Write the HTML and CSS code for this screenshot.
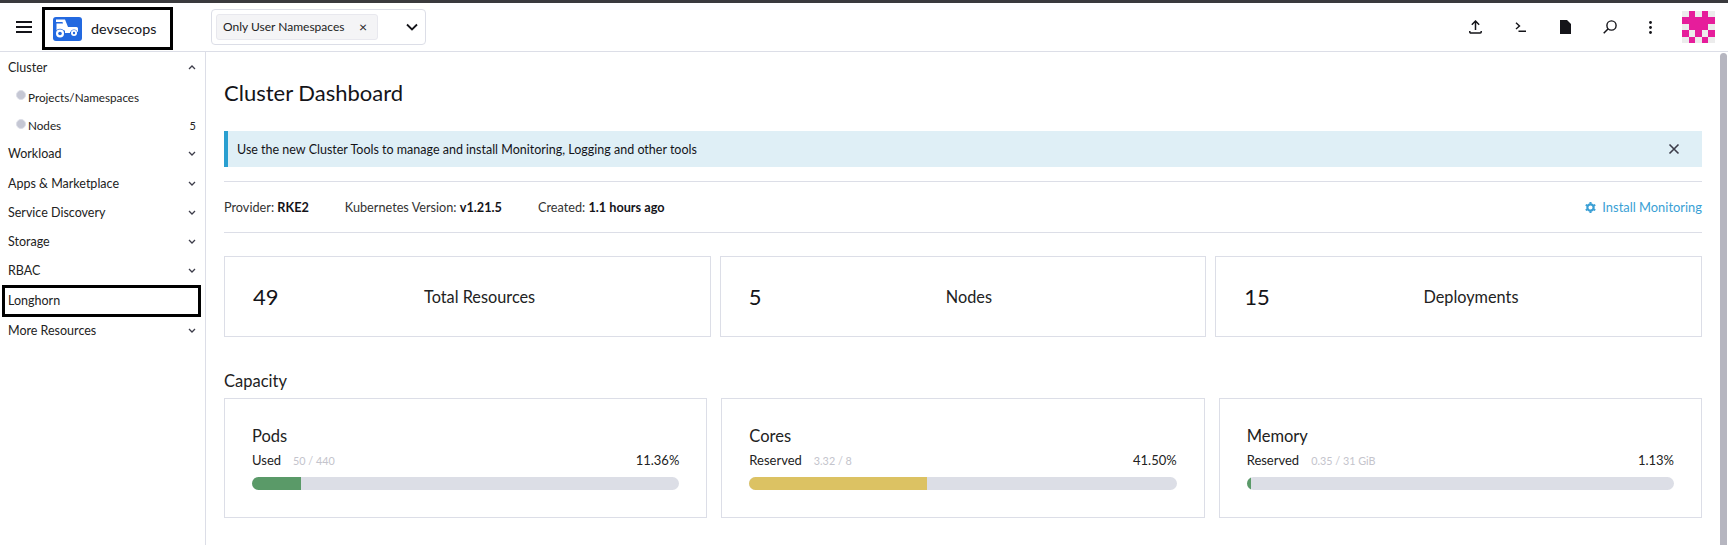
FILE: index.html
```html
<!DOCTYPE html>
<html lang="en">
<head>
    <meta charset="UTF-8">
    <title>Cluster Dashboard</title>
    <link rel="stylesheet" href="styles.css">
</head>
<body>
  <header class="topbar">
    <button class="menu-btn" aria-label="Menu">
      <svg width="18" height="14" viewBox="0 0 18 14"><path d="M1 2h16M1 7h16M1 12h16" stroke="#141419" stroke-width="2"/></svg>
    </button>
    <div class="cluster-box">
      <svg class="cluster-logo" width="29" height="24" viewBox="0 0 29 24">
        <rect width="29" height="24" rx="3" fill="#2369e0"/>
        <path d="M3 2.500h9l3 7.500h8.500a1.500 1.500 0 0 1 1.500 1.500V15h-8v1H12v-2.500H3.500V6.500h6.500L9.500 5H3z" fill="#fff"/>
        <circle cx="7" cy="16.500" r="4.800" fill="#2369e0"/>
        <circle cx="7" cy="16.500" r="4" fill="#fff"/>
        <circle cx="7" cy="16.500" r="1.800" fill="#2369e0"/>
        <circle cx="21" cy="16" r="3.600" fill="#2369e0"/>
        <circle cx="21" cy="16" r="3" fill="#fff"/>
        <circle cx="21" cy="16" r="1.200" fill="#2369e0"/>
      </svg>
      <span class="cluster-name">devsecops</span>
    </div>
    <div class="ns-select">
      <span class="ns-tag">Only User Namespaces <span class="ns-x">×</span></span>
      <svg width="12" height="8" viewBox="0 0 12 8"><path d="M1 1.500l5 5 5-5" fill="none" stroke="#141419" stroke-width="1.800"/></svg>
    </div>
    <div class="top-icons">
      <svg width="13" height="14" viewBox="0 0 13 14"><path d="M6.500 10V1M2.800 4.700L6.500 1l3.700 3.700M.8 11v1a1 1 0 0 0 1 1h9.400a1 1 0 0 0 1-1v-1" fill="none" stroke="#141419" stroke-width="1.500"/></svg>
      <svg width="11" height="10" viewBox="0 0 11 10"><path d="M1 .7L4.500 4 1 7M3.500 9.200H11" fill="none" stroke="#141419" stroke-width="1.400"/></svg>
      <svg width="11" height="14" viewBox="0 0 11 14"><path d="M0 0h7l4 4v10H0z" fill="#141419"/></svg>
      <svg width="14" height="14" viewBox="0 0 14 14"><circle cx="8.500" cy="5.500" r="4.600" fill="none" stroke="#141419" stroke-width="1.400"/><path d="M5.200 8.800L.7 13.300" stroke="#141419" stroke-width="1.500"/></svg>
      <svg width="3" height="13" viewBox="0 0 3 13"><circle cx="1.500" cy="1.500" r="1.400" fill="#141419"/><circle cx="1.500" cy="6.500" r="1.400" fill="#141419"/><circle cx="1.500" cy="11.500" r="1.400" fill="#141419"/></svg>
    </div>
    <svg class="avatar" width="33" height="32" viewBox="0 0 5 5" preserveAspectRatio="none" shape-rendering="crispEdges">
      <rect width="5" height="5" fill="#ececec"/>
      <path d="M1 0h1v1H1zM3 0h1v1H3zM0 1h5v1H0zM1 2h3v1H1zM0 3h1v1H0zM2 3h1v1H2zM4 3h1v1H4zM1 4h1v1H1zM3 4h1v1H3z" fill="#e61d9b"/>
    </svg>
  </header>

  <div class="layout">
    <nav class="sidebar">
      <div class="nav-row">Cluster <svg class="chev" width="8" height="5" viewBox="0 0 8 5"><path d="M1 4l3-3 3 3" fill="none" stroke="#3d3d4a" stroke-width="1.300"/></svg></div>
      <div class="nav-row nav-sub"><i class="dot"></i>Projects/Namespaces</div>
      <div class="nav-row nav-sub"><i class="dot"></i>Nodes <span class="count">5</span></div>
      <div class="nav-row">Workload <svg class="chev" width="8" height="5" viewBox="0 0 8 5"><path d="M1 1l3 3 3-3" fill="none" stroke="#3d3d4a" stroke-width="1.300"/></svg></div>
      <div class="nav-row">Apps &amp; Marketplace <svg class="chev" width="8" height="5" viewBox="0 0 8 5"><path d="M1 1l3 3 3-3" fill="none" stroke="#3d3d4a" stroke-width="1.300"/></svg></div>
      <div class="nav-row">Service Discovery <svg class="chev" width="8" height="5" viewBox="0 0 8 5"><path d="M1 1l3 3 3-3" fill="none" stroke="#3d3d4a" stroke-width="1.300"/></svg></div>
      <div class="nav-row">Storage <svg class="chev" width="8" height="5" viewBox="0 0 8 5"><path d="M1 1l3 3 3-3" fill="none" stroke="#3d3d4a" stroke-width="1.300"/></svg></div>
      <div class="nav-row">RBAC <svg class="chev" width="8" height="5" viewBox="0 0 8 5"><path d="M1 1l3 3 3-3" fill="none" stroke="#3d3d4a" stroke-width="1.300"/></svg></div>
      <div class="nav-row nav-marked">Longhorn</div>
      <div class="nav-row">More Resources <svg class="chev" width="8" height="5" viewBox="0 0 8 5"><path d="M1 1l3 3 3-3" fill="none" stroke="#3d3d4a" stroke-width="1.300"/></svg></div>
    </nav>

    <main class="content">
      <h1 class="title">Cluster Dashboard</h1>

      <div class="banner">
        <span>Use the new Cluster Tools to manage and install Monitoring, Logging and other tools</span>
        <svg width="12" height="12" viewBox="0 0 12 12"><path d="M1.500 1.500l9 9M10.500 1.500l-9 9" stroke="#3d3d4a" stroke-width="1.600"/></svg>
      </div>

      <div class="meta">
        <span>Provider: <b>RKE2</b></span>
        <span>Kubernetes Version: <b>v1.21.5</b></span>
        <span>Created: <b>1.1 hours ago</b></span>
        <a class="install" href="#">
          <svg width="11" height="11" viewBox="0 0 12 12"><circle cx="6" cy="6" r="3.400" fill="none" stroke="#3a9fd5" stroke-width="2.400"/><path d="M6 0v2M6 10v2M0.800 3l1.700 1M9.500 8l1.700 1M0.800 9l1.700-1M9.500 4l1.700-1" stroke="#3a9fd5" stroke-width="2.200"/></svg>
          Install Monitoring
        </a>
      </div>

      <div class="stats">
        <div class="stat"><span class="stat-num">49</span><span class="stat-label">Total Resources</span></div>
        <div class="stat"><span class="stat-num">5</span><span class="stat-label">Nodes</span></div>
        <div class="stat"><span class="stat-num">15</span><span class="stat-label">Deployments</span></div>
      </div>

      <h2 class="section">Capacity</h2>

      <div class="gauges">
        <div class="gauge">
          <h3>Pods</h3>
          <div class="gauge-info"><span>Used</span><small>50 / 440</small><span class="pct">11.36%</span></div>
          <div class="bar"><div class="fill fill-green" style="width: 11.36%"></div></div>
        </div>
        <div class="gauge">
          <h3>Cores</h3>
          <div class="gauge-info"><span>Reserved</span><small>3.32 / 8</small><span class="pct">41.50%</span></div>
          <div class="bar"><div class="fill fill-yellow" style="width: 41.5%"></div></div>
        </div>
        <div class="gauge">
          <h3>Memory</h3>
          <div class="gauge-info"><span>Reserved</span><small>0.35 / 31 GiB</small><span class="pct">1.13%</span></div>
          <div class="bar"><div class="fill fill-green" style="width: 1.13%"></div></div>
        </div>
      </div>
    </main>
  </div>
</body>
</html>
```

FILE: styles.css
```css
* { box-sizing: border-box; }
html, body { height: 100%; }
body { margin: 0; height: 545px; overflow: hidden; display: flex; flex-direction: column; font-family: Lato, "Liberation Sans", sans-serif; font-size: 14px; color: #141419; background: #fff; border-top: 3px solid #3a3a3d; }

.topbar { flex: none; height: 49px; display: flex; align-items: center; border-bottom: 1px solid #dcdee7; }
.menu-btn { margin-left: 15px; padding: 0; width: 20px; height: 14px; border: none; background: none; display: flex; }
.cluster-box { margin-left: 7px; margin-top: 3px; width: 131px; height: 43px; border: 3px solid #000; display: flex; align-items: center; padding-left: 8px; gap: 9px; }
.cluster-logo { flex: none; }
.cluster-name { font-size: 14.300px; color: #141419; }
.ns-select { margin-left: 38px; margin-top: -1px; width: 215px; height: 36px; border: 1px solid #dcdee7; border-radius: 4px; display: flex; align-items: center; justify-content: space-between; padding: 0 7px 0 4px; }
.ns-tag { width: 162px; height: 26px; background: #f4f4f6; border: 1px solid #e8e8ee; border-radius: 3px; font-size: 12px; color: #222; white-space: nowrap; display: flex; align-items: center; justify-content: space-between; padding: 0 10px 0 6px; }
.ns-x { font-size: 14px; }
.top-icons { margin-left: auto; display: flex; align-items: center; }
.top-icons svg { flex: none; }
.top-icons svg:nth-child(1) { margin-right: 33px; }
.top-icons svg:nth-child(2) { margin-right: 34px; }
.top-icons svg:nth-child(3) { margin-right: 32px; }
.top-icons svg:nth-child(4) { margin-right: 32px; }
.avatar { margin: 0 13px 0 30px; flex: none; }

.layout { flex: 1; display: flex; min-height: 0; }
.sidebar { flex: none; width: 206px; border-right: 1px solid #dcdee7; padding: 1px 0 0 2px; }
.nav-row { height: 29.250px; display: flex; align-items: center; padding-left: 6px; padding-right: 9px; font-size: 12.500px; color: #222; }
.chev { margin-left: auto; }
.nav-sub { height: 28.500px; font-size: 11.700px; padding-left: 14px; }
.dot { width: 10px; height: 10px; margin-right: 2px; margin-top: -3px; border-radius: 50%; background: #c5c7d4; border: 1px solid #dcdee7; }
.count { margin-left: auto; font-size: 11px; }
.nav-marked { width: 199px; height: 32px; margin: -1px 0; border: 3px solid #000; padding-left: 3px; }

.content { flex: 1; padding: 0 26px 0 18px; position: relative; }
.content::after { content: ""; position: absolute; top: 1px; right: 1px; width: 7px; height: 100%; background: #b6b6c0; border-radius: 4px 4px 0 0; }
.title { margin: 26px 0 0; font-size: 22px; font-weight: 400; line-height: 30px; }
.banner { margin-top: 23px; height: 36px; background: #dfeff6; border-left: 4px solid #2a9fd0; display: flex; align-items: center; justify-content: space-between; padding: 0 22px 0 9px; font-size: 12.500px; }

.meta { margin-top: 14px; height: 52px; border-top: 1px solid #dcdee7; border-bottom: 1px solid #dcdee7; display: flex; align-items: center; font-size: 12.700px; color: #333; gap: 36px; }
.meta b { color: #141419; }
.install { margin-left: auto; font-size: 12.900px; color: #3a9fd5; text-decoration: none; display: flex; align-items: center; gap: 6px; }

.stats { margin-top: 23px; display: grid; grid-template-columns: repeat(3, 1fr); gap: 9px; }
.stat { height: 81px; border: 1px solid #dcdee7; display: flex; align-items: center; padding: 0 28px; }
.stat-num { font-size: 22px; }
.stat-label { flex: 1; padding-right: 1px; text-align: center; font-size: 16.300px; color: #222; }

.section { margin: 32px 0 0; font-size: 16.500px; font-weight: 400; line-height: 24px; color: #222; }
.gauges { margin-top: 5px; display: grid; grid-template-columns: repeat(3, 1fr); gap: 14px; }
.gauge { height: 120px; border: 1px solid #dcdee7; padding: 25px 27px; }
.gauge h3 { margin: 0; font-size: 16.500px; font-weight: 400; line-height: 24px; color: #222; }
.gauge-info { margin-top: 4px; display: flex; align-items: baseline; font-size: 13px; color: #222; }
.gauge-info small { margin-left: 12px; font-size: 10.800px; color: #c4c4cc; }
.pct { margin-left: auto; }
.bar { margin-top: 9px; height: 13px; border-radius: 7px; background: #dcdee6; overflow: hidden; }
.fill { height: 100%; }
.fill-green { background: #5a9a68; }
.fill-yellow { background: #dcc263; }
```
